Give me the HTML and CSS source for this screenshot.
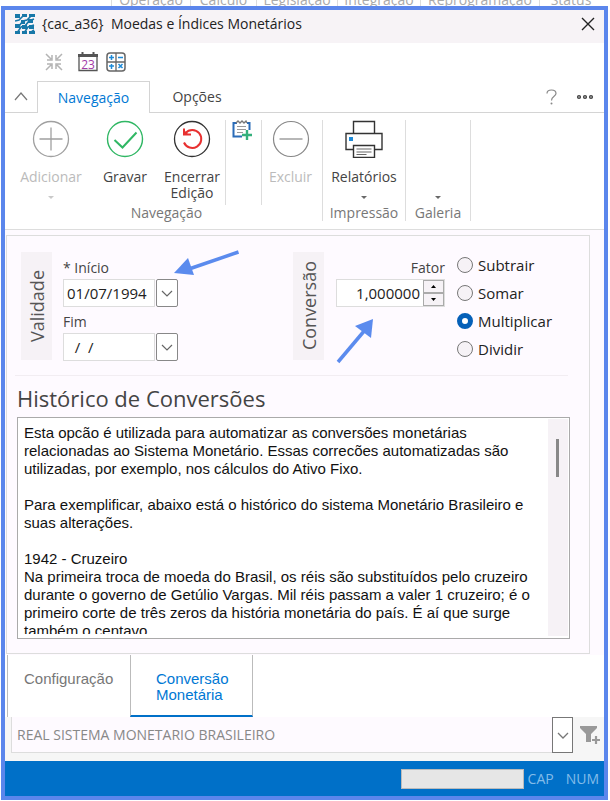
FILE: index.html
```html
<!DOCTYPE html>
<html lang="pt-BR">
<head>
<meta charset="utf-8">
<title>Moedas e Índices Monetários</title>
<link rel="stylesheet" href="styles.css">
</head>
<body>
<div class="backdrop"><span class="w79">Operação</span><span class="w66">Calculo</span><span class="w81">Legislação</span><span class="w83">Integração</span><span class="w119">Reprogramação</span><span class="w63">Status</span></div>
<main class="window">
  <header class="titlebar">
    <svg class="logo" width="20" height="20" viewBox="0 0 20 20"><g fill="none" stroke="#1878a8" stroke-width="1.600"><path d="M0 7l4-1 5-5M0 13l4-1 4-5 4-1 5-5M2 19l4-6 4-1 4-5 5-2M9 19l4-6 6-2M15 19l4-3"/></g><g fill="#1878a8"><path d="M0 0h5v4H0zM7 0h5v3H7zM14 0h6v3h-6zM6 6h4v4H6zM13 5h5v4h-5zM0 10h5v4H0zM7 11h5v4H7zM14 11h5v4h-5zM0 17h5v3H0zM7 17h5v3H7zM14 17h6v3h-6z"/></g></svg>
    <h1>{cac_a36}&nbsp; Moedas e Índices Monetários</h1>
    <button class="icon close" aria-label="Fechar"><svg width="14" height="14" viewBox="0 0 14 14"><path d="M1 1l12 12M13 1L1 13" stroke="#222" stroke-width="1.4"/></svg></button>
  </header>
  <div class="quick">
    <button class="icon" aria-label="Recolher"><svg width="18" height="18" viewBox="0 0 18 18" fill="none" stroke="#b4b4b4" stroke-width="1.5"><path d="M1 1l5 5M2 7h5V2M17 1l-5 5M11 2v5h5M1 17l5-5M2 11h5v5M17 17l-5-5M16 11h-5v5"/></svg></button>
    <button class="icon" aria-label="Calendário"><svg width="20" height="20" viewBox="0 0 20 20"><path d="M1 3h18v15.500H1z" fill="#fff" stroke="#555" stroke-width="1.300"/><path d="M0 2h20v3H0z" fill="#555"/><path d="M4.500 0v3M15.500 0v3" stroke="#555" stroke-width="2"/><text x="10" y="16.500" text-anchor="middle" class="day">23</text></svg></button>
    <button class="icon" aria-label="Calculadora"><svg width="20" height="20" viewBox="0 0 20 20"><rect x="1" y="1" width="18" height="18" rx="3" fill="#fff" stroke="#666" stroke-width="1.500"/><path d="M10 1v18M1 10h18" stroke="#666" stroke-width="1.300"/><path d="M3 5.500h5M5.500 3v5M12 5.500h5M3 14h5M5.500 12v5M12.500 12l4 4M16.500 12l-4 4" stroke="#1d8ad8" stroke-width="1.500"/></svg></button>
  </div>
  <nav class="tabs">
    <button class="icon collapse" aria-label="Minimizar faixa"><svg width="14" height="9" viewBox="0 0 14 9"><path d="M1 8l6-7 6 7" fill="none" stroke="#777" stroke-width="1.200"/></svg></button>
    <button class="tab active">Navegação</button>
    <button class="tab">Opções</button>
    <span class="filler"></span>
    <button class="icon help" aria-label="Ajuda"><svg width="11" height="16" viewBox="0 0 11 16"><path d="M1 4.500Q1 1 5.500 1T10 4.500C10 7.500 5.500 7 5.500 11.500" fill="none" stroke="#888" stroke-width="1.200"/><circle cx="5.500" cy="14.500" r="1" fill="#888"/></svg></button>
    <button class="icon more" aria-label="Mais"><svg width="18" height="6" viewBox="0 0 18 6" fill="#999" stroke="#444" stroke-width="1.200"><circle cx="3" cy="3" r="1.500"/><circle cx="9" cy="3" r="1.500"/><circle cx="15" cy="3" r="1.500"/></svg></button>
  </nav>
  <section class="ribbon">
    <div class="group navegacao">
      <div class="tools">
        <button class="tool add" disabled><svg width="38" height="38" viewBox="0 0 38 38" fill="none" stroke="#a0a0a0" stroke-width="1.300"><circle cx="19" cy="19" r="17.500"/><path d="M7.500 19h23M19 7.500v23"/></svg><span>Adicionar</span><i class="caret"></i></button>
        <button class="tool save"><svg width="38" height="38" viewBox="0 0 38 38" fill="none" stroke="#30b764" stroke-width="1.400"><circle cx="19" cy="19" r="17.500"/><path d="M8.500 20l8 7.500 14-15" stroke-width="2"/></svg><span>Gravar</span></button>
        <button class="tool end"><svg width="38" height="38" viewBox="0 0 38 38" fill="none"><circle cx="19" cy="19" r="17.500" stroke="#333" stroke-width="1.300"/><path d="M11 22.500a9 9 0 1 0 1.500-9.500M11 8.500v6h7" stroke="#e83030" stroke-width="2"/><path d="M10.500 9.500v5.500h5.500z" fill="#e83030"/></svg><span>Encerrar<br>Edição</span></button>
        <button class="tool note" aria-label="Nova anotação"><svg width="20" height="20" viewBox="0 0 20 20" fill="none"><path d="M5 3H1.500v13.500H10M15 3h2.500v7" stroke="#2b6cb8" stroke-width="2"/><path d="M4 3l2-2 2 2 2-2 2 2 2-2 1 2" stroke="#777" stroke-width="1.300"/><path d="M5 6.500h9M5 9.500h9M5 12.500h6" stroke="#999"/><path d="M15 10v10M10 15h10" stroke="#34b07c" stroke-width="2.400"/></svg></button>
        <button class="tool remove" disabled><svg width="38" height="38" viewBox="0 0 38 38" fill="none" stroke="#888" stroke-width="1.200"><circle cx="19" cy="19" r="17.500"/><path d="M7.500 19h23"/></svg><span>Excluir</span></button>
      </div>
      <div class="caption">Navegação</div>
    </div>
    <div class="group impressao">
      <div class="tools">
        <button class="tool"><svg width="38" height="38" viewBox="0 0 38 38" fill="#fff" stroke="#333" stroke-width="1.400"><path d="M8.500 14V1.500h21V14"/><path d="M8.500 29.500H1V13.500h36v16h-7.500"/><path d="M8.500 25.500h21v12h-21z"/><path d="M11.500 29h15M11.500 32h15M11.500 34.500h10" stroke="#666" stroke-width="1.200"/><path d="M4 17h4v4H4z" fill="#1d8ad8" stroke="none"/></svg><span>Relatórios</span><i class="caret"></i></button>
      </div>
      <div class="caption">Impressão</div>
    </div>
    <div class="group galeria">
      <div class="tools"><button class="tool" aria-label="Galeria"><i class="caret"></i></button></div>
      <div class="caption">Galeria</div>
    </div>
  </section>
  <div class="body">
    <div class="panel">
      <form class="fields">
        <div class="vertical"><span>Validade</span></div>
        <div class="dates">
          <label for="inicio">* Início</label>
          <div class="date"><input id="inicio" value="01/07/1994"><button type="button" class="drop" aria-label="Abrir calendário de início"><svg width="12" height="7" viewBox="0 0 12 7"><path d="M1 1l5 5 5-5" fill="none" stroke="#666" stroke-width="1.200"/></svg></button></div>
          <label for="fim">Fim</label>
          <div class="date"><input id="fim" value="&nbsp; /&nbsp; /"><button type="button" class="drop" aria-label="Abrir calendário de fim"><svg width="12" height="7" viewBox="0 0 12 7"><path d="M1 1l5 5 5-5" fill="none" stroke="#666" stroke-width="1.200"/></svg></button></div>
        </div>
        <div class="vertical"><span>Conversão</span></div>
        <div class="factor">
          <label for="fator">Fator</label>
          <div class="spin"><input id="fator" value="1,000000"><div class="steps"><button type="button" aria-label="Aumentar"><svg width="5" height="3" viewBox="0 0 5 3"><path d="M0 3L2.500 0 5 3z"/></svg></button><button type="button" aria-label="Diminuir"><svg width="5" height="3" viewBox="0 0 5 3"><path d="M0 0l2.500 3L5 0z"/></svg></button></div></div>
        </div>
        <div class="radios">
          <label><input type="radio" name="op">Subtrair</label>
          <label><input type="radio" name="op">Somar</label>
          <label><input type="radio" name="op" checked>Multiplicar</label>
          <label><input type="radio" name="op">Dividir</label>
        </div>
        <svg class="arrow start" width="66" height="26" viewBox="0 0 66 26"><path d="M64.500 2L15 19" stroke="#5b8bee" stroke-width="3.500"/><path d="M0 23L14 8l6 17z" fill="#5b8bee"/></svg>
        <svg class="arrow rate" width="38" height="46" viewBox="0 0 38 46"><path d="M2 44L29 12" stroke="#5b8bee" stroke-width="3.500"/><path d="M37 1l-2 19-16-12z" fill="#5b8bee"/></svg>
      </form>
      <h2><label for="historico">Histórico de Conversões</label></h2>
      <div class="memo">
        <textarea id="historico" wrap="off">Esta opcão é utilizada para automatizar as conversões monetárias
relacionadas ao Sistema Monetário. Essas correcões automatizadas são
utilizadas, por exemplo, nos cálculos do Ativo Fixo.

Para exemplificar, abaixo está o histórico do sistema Monetário Brasileiro e
suas alterações.

1942 - Cruzeiro
Na primeira troca de moeda do Brasil, os réis são substituídos pelo cruzeiro
durante o governo de Getúlio Vargas. Mil réis passam a valer 1 cruzeiro; é o
primeiro corte de três zeros da história monetária do país. É aí que surge
também o centavo.</textarea>
        <div class="track"><div class="thumb"></div></div>
      </div>
    </div>
  </div>
  <nav class="pages"><button>Configuração</button><button class="current">Conversão<br>Monetária</button></nav>
  <div class="lookup">
    <div class="combo"><select aria-label="Moeda"><option>REAL SISTEMA MONETARIO BRASILEIRO</option></select><span class="chevron"><svg width="12" height="7" viewBox="0 0 12 7"><path d="M1 1l5 5 5-5" fill="none" stroke="#777" stroke-width="1.300"/></svg></span></div>
    <button class="icon filter" aria-label="Adicionar filtro"><svg width="20" height="18" viewBox="0 0 20 18"><path d="M0 0h17v2l-6 6v8H6V8L0 2z" fill="#999"/><path d="M16 10v8M12 14h8" stroke="#999" stroke-width="2.200"/></svg></button>
  </div>
  <footer class="status"><span class="progress"></span><span>CAP</span><span>NUM</span></footer>
</main>
</body>
</html>
```
FILE: styles.css
```css
* { box-sizing: border-box; }
body {
  margin: 0;
  min-height: 100vh;
  display: flex;
  flex-direction: column;
  background: #fff;
  color: #444;
  font: 14px/20px "Open Sans", "Noto Sans", sans-serif;
}
button, input, select, textarea { font: inherit; color: inherit; margin: 0; }
button { background: none; border: 0; padding: 0; }
svg { display: block; }
.backdrop {
  height: 6px;
  display: flex;
  align-items: flex-end;
  overflow: hidden;
  padding-left: 111px;
  color: #aaa;
  line-height: 12px;
}
.backdrop span { border-left: 1px solid #ddd; text-align: center; }
.w79 { width: 79px; }
.w66 { width: 66px; }
.w81 { width: 81px; }
.w83 { width: 83px; }
.w119 { width: 119px; }
.w63 { width: 63px; }
.window {
  flex: 1;
  display: flex;
  flex-direction: column;
  margin: 0 2px 1px 1px;
  border: 4px solid #5b86ec;
  background: #fff;
}
.titlebar {
  height: 33px;
  display: flex;
  align-items: center;
  padding: 0 9px 5px 10px;
  background: #f7f3f6;
}
.titlebar h1 { margin: 0 auto 0 7px; font-size: 14px; font-weight: 400; color: #222; }
.quick { height: 38px; display: flex; align-items: center; gap: 8px; padding: 0 40px; }
.quick .icon:first-child { margin-right: 7px; }
.day { font: 12px "Open Sans", sans-serif; fill: #a33aa8; }
.tabs { height: 32px; display: flex; }
.tabs > * { border-bottom: 1px solid #d4d4d4; }
.tabs svg { margin: 0 auto; }
.collapse { width: 32px; }
.tab { width: 94px; }
.tab.active { width: 113px; border: 1px solid #d4d4d4; border-bottom: 0; color: #0078d4; }
.filler { flex: 1; }
.help { width: 30px; }
.more { width: 38px; }
.ribbon { display: flex; height: 117px; padding: 7px 0 8px; border-bottom: 1px solid #ddd; }
.group { display: flex; flex-direction: column; border-right: 1px solid #ddd; }
.tools { flex: 1; display: flex; }
.tool { display: flex; flex-direction: column; align-items: center; line-height: 16px; width: 100%; }
.tool svg { margin-bottom: 11px; }
.tool:disabled { color: #bbb; }
.caption { text-align: center; line-height: 16px; color: #777; }
.navegacao { width: 318px; }
.navegacao .caption { padding-left: 6px; }
.impressao { width: 83px; }
.galeria { width: 65px; }
.add { width: 92px; }
.save { width: 56px; }
.end { width: 73px; padding-left: 6px; }
.end, .note { border-right: 1px solid #ddd; }
.note { width: 36px; padding-right: 3px; }
.remove { width: 60px; padding-right: 3px; }
.caret { margin-top: auto; margin-bottom: 6px; border: 3px solid transparent; border-top-color: currentColor; border-bottom: 0; opacity: .8; }
.body { background: #fefaff; padding: 5px 14px 0 1px; flex: 1; }
.panel { height: 100%; border: 1px solid #ddd; padding: 0 19px 14px 10px; }
.fields { position: relative; display: flex; height: 140px; margin: 0 2px 0 -2px; padding: 16px 0 0 6px; border-bottom: 1px solid #f2edf2; }
.vertical { width: 31px; height: 108px; background: #f6f2f6; display: grid; place-items: center; color: #555; font-size: 18px; }
.vertical span { writing-mode: vertical-rl; transform: rotate(180deg); }
.dates { width: 115px; margin: 6px 115px 0 11px; }
.dates label, .factor label { display: block; height: 21px; line-height: 20px; }
.date { display: flex; gap: 1px; height: 28px; margin-bottom: 5px; }
.date input, .spin input { flex: 1; min-width: 0; border: 1px solid #ddd; background: #fff; padding: 0 3px; color: #222; font-size: 15px; }
.drop { width: 22px; border: 1px solid #888; border-radius: 2px; background: #fff; display: grid; place-items: center; }
.factor { width: 109px; margin: 6px 12px 0; text-align: right; }
.spin { display: flex; height: 28px; border: 1px solid #ddd; background: #fff; }
.spin input { border: 0; text-align: right; }
.steps { width: 21px; display: grid; }
.steps button { border: 1px solid #aaa; background: #f6f2f6; display: grid; place-items: center; }
.radios label { display: flex; align-items: center; gap: 5px; height: 28px; color: #222; font-size: 15px; }
.radios { margin-top: -1px; }
.radios input { appearance: none; width: 16px; height: 16px; border: 1px solid #777; border-radius: 50%; background: #f6f2f6; }
.radios input:checked { border: 5px solid #0560b8; background: #fff; }
.arrow { position: absolute; }
.start { left: 159px; top: 14px; }
.rate { left: 321px; top: 82px; }
h2 { margin: 8px 0 5px; font-size: 22px; line-height: 28px; font-weight: 400; }
.memo { display: flex; height: 222px; border: 1px solid #aaa; background: #fff; padding: 1px 1px 2px; }
.memo textarea { flex: 1; min-width: 0; margin-bottom: 2px; border: 0; padding: 5px 5px 0; resize: none; overflow: hidden; font: 15px/18px "Liberation Sans", sans-serif; color: #111; background: none; }
.track { width: 20px; background: #f6f2f6; padding: 20px 8px; }
.thumb { width: 3px; height: 38px; background: #888; }
.pages { height: 62px; display: flex; margin: 0 14px 0 2px; border-left: 1px solid #bbb; background: #fff; }
.pages button { width: 122px; padding: 16px 0 0 16px; display: flex; text-align: left; font: 15px/16px "Liberation Sans", sans-serif; color: #777; }
.pages .current { width: 123px; padding-left: 25px; border: 1px solid #bbb; border-top: 0; border-bottom: 2px solid #0070c8; color: #0078d4; }
.lookup { height: 44px; display: flex; gap: 7px; padding: 0 4px 8px 6px; background: #f6f6f6; }
.combo { flex: 1; display: flex; position: relative; }
.combo select { width: 100%; appearance: none; border: 1px solid #ddd; border-top: 0; border-radius: 0; background: #fefaff; padding: 0 24px 0 5px; color: #888; }
.chevron { position: absolute; inset: 0 0 0 auto; width: 21px; border: 1px solid #777; background: #fff; display: grid; place-items: center; pointer-events: none; }
.status { height: 35px; display: flex; align-items: center; padding-right: 5px; gap: 12px; justify-content: flex-end; background: #0070c8; color: #83bce9; }
.progress { width: 123px; height: 20px; background: #e6e6e6; border: 1px solid #bbb; margin-right: -8px; }
```
